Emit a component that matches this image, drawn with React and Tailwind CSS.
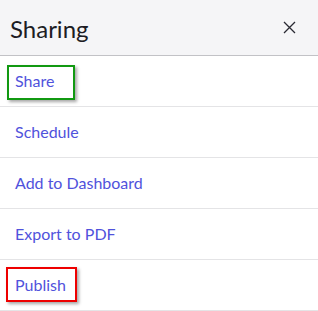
export default function App() {
  const items = ['Share', 'Schedule', 'Add to Dashboard', 'Export to PDF', 'Publish']

  return (
    <div className="w-[318px] h-[311px] bg-white" style={{ fontFamily: 'Lato, "Noto Sans", sans-serif' }}>
      <div className="h-[56px] bg-[#f5f5f7] border-b border-[#c2c2c6] flex items-center justify-between pl-[10px] pr-[22px]">
        <h1 className="text-[24px] text-[#1d1d24] leading-none pt-[3px]">Sharing</h1>
        <svg width="13" height="13" viewBox="0 0 13 13" className="text-[#2a2a33]">
          <path d="M1 1 L12 12 M12 1 L1 12" stroke="currentColor" strokeWidth="1.3" />
        </svg>
      </div>
      {items.map((label, i) => (
        <div key={label} className="relative h-[51px] border-b border-[#e4e4e6] flex items-center pl-[15px]">
          <span className="text-[16px] text-[#5052dc]">{label}</span>
          {i === 0 && (
            <div className="absolute left-[7px] top-[9px] w-[68px] h-[35px] border-2 border-[#119911] shadow-[2px_2px_3px_rgba(0,0,0,0.35)]" />
          )}
          {i === 4 && (
            <div className="absolute left-[6px] top-[7px] w-[71px] h-[35px] border-2 border-[#ee0000] shadow-[2px_2px_3px_rgba(0,0,0,0.35)]" />
          )}
        </div>
      ))}
    </div>
  )
}
